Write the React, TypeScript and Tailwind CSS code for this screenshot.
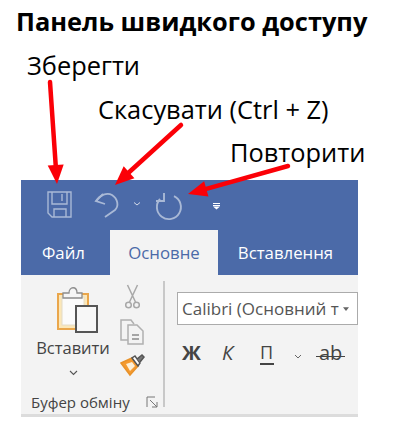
const font = { fontFamily: '"Open Sans", "Noto Sans", sans-serif' };

function Arrow({ x1, y1, x2, y2 }: { x1: number; y1: number; x2: number; y2: number }) {
  const dx = x2 - x1;
  const dy = y2 - y1;
  const l = Math.hypot(dx, dy);
  const ux = dx / l;
  const uy = dy / l;
  const bx = x2 - ux * 19;
  const by = y2 - uy * 19;
  const px = -uy * 8;
  const py = ux * 8;
  return (
    <>
      <line x1={x1} y1={y1} x2={bx} y2={by} stroke="#fb0007" strokeWidth="4.5" strokeLinecap="round" />
      <polygon points={`${x2},${y2} ${bx + px},${by + py} ${bx - px},${by - py}`} fill="#fb0007" />
    </>
  );
}

export default function App() {
  return (
    <div className="relative h-[434px] w-[400px] overflow-hidden bg-white text-black" style={font}>
      <h1 className="whitespace-nowrap pl-[16px] pt-[4px] text-[25.400px] font-bold leading-[34px]">Панель швидкого доступу</h1>
      <span className="absolute left-[27px] top-[49px] text-[25.400px] leading-[32px]">Зберегти</span>
      <span className="absolute left-[98px] top-[93px] text-[25.400px] leading-[32px]">Скасувати (Ctrl + Z)</span>
      <span className="absolute left-[230px] top-[136px] text-[25.400px] leading-[32px]">Повторити</span>

      <div className="ml-[21px] mt-[142px] w-[337px]">
        <div className="h-[95px] bg-[#4b6aa8]">
          <div className="flex h-[50px] items-center">
            <svg width="337" height="50" viewBox="0 0 337 50" fill="none" stroke="#a9b9d6" strokeWidth="1.4">
              <path d="M27 12h23v25H31l-4-4z" />
              <path d="M31 12v12h15V12M41 14v7M33 37v-8h12v8" />
              <path d="M82 14l-7 7 9 3" strokeWidth="1.8" />
              <path d="M75 21c4-6 11-9 16-6 6 4 7 11 3 15l-10 7" strokeWidth="1.8" />
              <path d="M113 22.500l3 2.500 3-2.500" strokeWidth="1" stroke="#d5dcea" />
              <path d="M153 16.200A12 12 0 1 1 139 19" strokeWidth="1.900" />
              <path d="M143 13v8h-8" strokeWidth="1.900" />
              <path d="M192 23.500h7M192 25.500h7" stroke="#ffffff" strokeWidth="1.200" />
              <path d="M192 26.500h7l-3.500 3z" fill="#ffffff" stroke="none" />
            </svg>
          </div>
          <div className="flex h-[45px] text-[16.800px]">
            <span className="flex w-[89px] items-center justify-center pr-[4px] pt-[1px] text-white">Файл</span>
            <span className="flex w-[108px] items-center justify-center bg-[#f3f3f3] pt-[1px] text-[#4b6aa8]">Основне</span>
            <span className="flex flex-1 items-center justify-center pt-[1px] pl-[5px] pr-[10px] text-white">Вставлення</span>
          </div>
        </div>
        <div className="flex h-[142px] border-b-[3px] border-[#dcdcdc] bg-[#f3f3f3] text-[#444444]">
          <div className="flex w-[142px] flex-col pb-[2px]">
            <div className="flex flex-1">
              <div className="flex w-[104px] flex-col items-center">
                <svg width="44" height="47" viewBox="0 0 44 47" className="ml-[9px] mt-[11px] shrink-0">
                  <rect x="2" y="8" width="30" height="35" fill="#fbe7b8" stroke="#eaa64b" strokeWidth="2" />
                  <rect x="6" y="11" width="22" height="28" fill="#fbfbfb" stroke="#e4dcc8" />
                  <path d="M7 12V7h6c0-7 8-7 8 0h5v5z" fill="#f5f5f5" stroke="#8c8c8c" strokeWidth="1.300" />
                  <rect x="20" y="20" width="21" height="26" fill="#f7f7f7" stroke="#555555" strokeWidth="2" />
                </svg>
                <span className="mt-[4px] text-[16.500px] leading-[22px]">Вставити</span>
                <svg width="9" height="6" viewBox="0 0 9 6" className="mt-[11px]" fill="none" stroke="#555555" strokeWidth="1.100">
                  <path d="M1 1l3.500 3.500L8 1" />
                </svg>
              </div>
              <div className="flex flex-col items-start pt-[9px]">
                <svg width="15" height="25" viewBox="0 0 15 25" fill="none" stroke="#a8a8a8" strokeWidth="1.500">
                  <path d="M2.500 1l8 17M12.500 1l-8 17" />
                  <circle cx="3.500" cy="21" r="2.800" />
                  <circle cx="11.500" cy="21" r="2.800" />
                </svg>
                <svg width="24" height="26" viewBox="0 0 24 26" fill="none" stroke="#b0b0b0" strokeWidth="1.500" className="-ml-[5px] mt-[10px]">
                  <path d="M8 21H1V1h10l3 4" />
                  <path d="M8 6h9l6 6v13H8z" fill="#f3f3f3" />
                  <path d="M12 16h7M12 20h7" stroke="#8c8c8c" />
                </svg>
                <svg width="26" height="24" viewBox="0 0 26 24" className="-ml-[5px] mt-[8px]">
                  <path d="M1 10l11-5 6 8-8 9z" fill="#f59a2f" stroke="#e8922a" strokeWidth="1.500" />
                  <path d="M6 11l6-2 3 4-5 5z" fill="#fdf0d8" />
                  <path d="M12 5l6 8 2-3-5-7z" fill="#ffffff" stroke="#555555" strokeWidth="1.500" />
                  <path d="M17 6l5-4 2 2-4 5" fill="#777777" stroke="#555555" strokeWidth="1.500" />
                </svg>
              </div>
            </div>
            <div className="flex items-center justify-between pl-[10px] pr-[5px]">
              <span className="whitespace-nowrap text-[15px] leading-[20px]">Буфер обміну</span>
              <svg width="12" height="12" viewBox="0 0 12 12" fill="none" stroke="#777777" strokeWidth="1">
                <path d="M1 11V1h8M4 4l7 7M6 11h5V6" />
              </svg>
            </div>
          </div>
          <div className="mb-[7px] mt-[6px] w-[2px] bg-[#c8c8c8]" />
          <div className="flex-1 pl-[12px] pt-[17px]">
            <div className="flex h-[33px] items-center justify-between border-[1px] border-[#ababab] bg-white pl-[4px] pr-[8px] text-[17px] text-[#555555]">
              <span className="w-[157px] overflow-hidden whitespace-nowrap">Calibri (Основний т</span>
              <svg width="6" height="4" viewBox="0 0 8 5" className="shrink-0"><path d="M0 0h8L4 5z" fill="#666666" /></svg>
            </div>
            <div className="mt-[13px] flex h-[30px] items-center text-[#444444]">
              <span className="ml-[5px] w-[20px] text-[20px] font-bold leading-[30px]">Ж</span>
              <span className="ml-[20px] w-[14px] text-[20px] italic leading-[30px]">К</span>
              <span className="ml-[24px] w-[14px] border-b-[2px] border-[#444444] text-[18px] leading-[21px]">П</span>
              <svg width="8" height="5" viewBox="0 0 8 5" className="ml-[20px] mt-[6px]" fill="none" stroke="#666666"><path d="M1 1l3 3 3-3" /></svg>
              <span className="relative ml-[17px] text-[20px] leading-[30px]">ab<span className="absolute left-[-3px] right-[-3px] top-[18px] h-[1px] bg-[#444444]" /></span>
            </div>
          </div>
        </div>
      </div>

      <svg className="absolute left-0 top-0" width="400" height="434" viewBox="0 0 400 434">
        <Arrow x1={50} y1={82} x2={57} y2={184} />
        <Arrow x1={181} y1={125} x2={115} y2={185} />
        <Arrow x1={288} y1={166} x2={188} y2={194} />
      </svg>
    </div>
  );
}
